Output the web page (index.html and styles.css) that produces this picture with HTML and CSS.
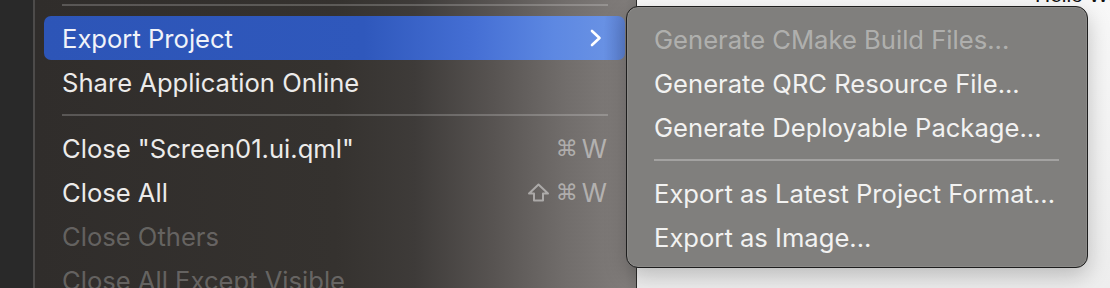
FILE: index.html
```html
<!DOCTYPE html>
<html lang="en">
<head>
    <meta charset="UTF-8">
    <meta name="viewport" content="width=device-width, initial-scale=1.0">
    <title>File Menu - Export Project</title>
    <link rel="stylesheet" href="styles.css">
</head>
<body>
    <div class="screen">
        <div class="sidebar"></div>

        <div class="menu">
            <div class="sep sep-top"><div class="line"></div></div>
            <div class="item active">
                <span class="label">Export Project</span>
                <svg class="chevron" width="12" height="18" viewBox="0 0 12 18">
                    <path d="M2 2 L9.5 9 L2 16" fill="none" stroke="#ffffff" stroke-width="2.6" stroke-linecap="round" stroke-linejoin="round"/>
                </svg>
            </div>
            <div class="item"><span class="label">Share Application Online</span></div>
            <div class="sep"><div class="line"></div></div>
            <div class="item">
                <span class="label">Close "Screen01.ui.qml"</span>
                <span class="keys"><span class="glyph">⌘</span>W</span>
            </div>
            <div class="item">
                <span class="label">Close All</span>
                <span class="keys">
                    <svg class="shift" width="23" height="19" viewBox="0 0 23 19">
                        <path d="M11.5 1.5 L21 10.5 H16 V17.5 H7 V10.5 H2 Z" fill="none" stroke="currentColor" stroke-width="2" stroke-linejoin="round"/>
                    </svg>
                    <span class="glyph">⌘</span>W
                </span>
            </div>
            <div class="item disabled"><span class="label">Close Others</span></div>
            <div class="item disabled"><span class="label">Close All Except Visible</span></div>
        </div>

        <div class="canvas">
            <span class="canvas-text">Hello World</span>
        </div>

        <div class="submenu">
            <div class="item disabled"><span class="label">Generate CMake Build Files...</span></div>
            <div class="item"><span class="label">Generate QRC Resource File...</span></div>
            <div class="item"><span class="label">Generate Deployable Package...</span></div>
            <div class="sep"><div class="line"></div></div>
            <div class="item"><span class="label">Export as Latest Project Format...</span></div>
            <div class="item"><span class="label">Export as Image...</span></div>
        </div>
    </div>
</body>
</html>
```

FILE: styles.css
```css
body {
    margin: 0;
    background-color: #f4f4f4;
    font-family: Inter, "Noto Sans", "DejaVu Sans", sans-serif;
}
.screen {
    position: relative;
    display: flex;
    width: 1110px;
    height: 288px;
    overflow: hidden;
}
.sidebar {
    width: 33px;
    background-color: #292929;
}
.menu {
    width: 601px;
    border-left: 2px solid #4d4b4a;
    border-right: 1px solid #2b2a29;
    background: linear-gradient(to right, #302d2b 0px, #35322f 300px, #3e3b39 380px, #585452 460px, #716d6b 530px, #807c7a 590px, #7b7876 601px);
}
.item {
    display: flex;
    align-items: center;
    height: 44px;
    margin: 0 11px 0 9px;
    padding: 0 18px;
    border-radius: 7px;
    font-size: 25.6px;
    color: #ecebea;
}
.item .label {
    flex: 1;
    white-space: nowrap;
}
.item.disabled {
    color: rgba(255, 255, 255, 0.26);
}
.item.active {
    background: linear-gradient(to right, #2d55b7 0px, #2f58bc 320px, #456fd4 430px, #5d88e2 510px, #6891e4 560px, #5b7fcf 581px);
    color: #f1f3f9;
}
.chevron {
    margin-right: 5px;
}
.keys {
    display: flex;
    align-items: center;
    gap: 4px;
    color: rgba(255, 255, 255, 0.45);
}
.glyph {
    font-family: "DejaVu Sans", sans-serif;
    font-size: 22px;
}
.shift {
    margin-right: 2px;
}
.sep {
    display: flex;
    align-items: center;
    height: 22px;
    padding: 0 28px 0 27px;
}
.sep-top {
    margin-top: -6px;
}
.line {
    flex: 1;
    height: 2px;
    background-color: rgba(255, 255, 255, 0.2);
}
.canvas {
    position: relative;
    flex: 1;
    background: linear-gradient(to bottom, #f8f8f8, #eeeeee);
}
.canvas-text {
    position: absolute;
    top: -17px;
    left: 398px;
    font-family: "Liberation Sans", Arial, sans-serif;
    font-size: 21px;
    color: #111111;
    white-space: nowrap;
}
.submenu {
    position: absolute;
    top: 6px;
    left: 626px;
    box-sizing: border-box;
    width: 462px;
    height: 262px;
    padding: 10px 0 8px;
    border: 1px solid #1e1e1e;
    border-radius: 12px;
    background-color: #807f7d;
    box-shadow: 0 8px 22px rgba(0, 0, 0, 0.22), inset 0 0 0 1px rgba(255, 255, 255, 0.08);
}
.submenu .item {
    margin: 0 10px;
    padding: 0 17px;
    color: #f2f2f1;
}
.submenu .item.disabled {
    color: rgba(255, 255, 255, 0.4);
}
.submenu .sep {
    padding: 0 28px 0 27px;
}
.submenu .line {
    background-color: rgba(255, 255, 255, 0.28);
}
```
